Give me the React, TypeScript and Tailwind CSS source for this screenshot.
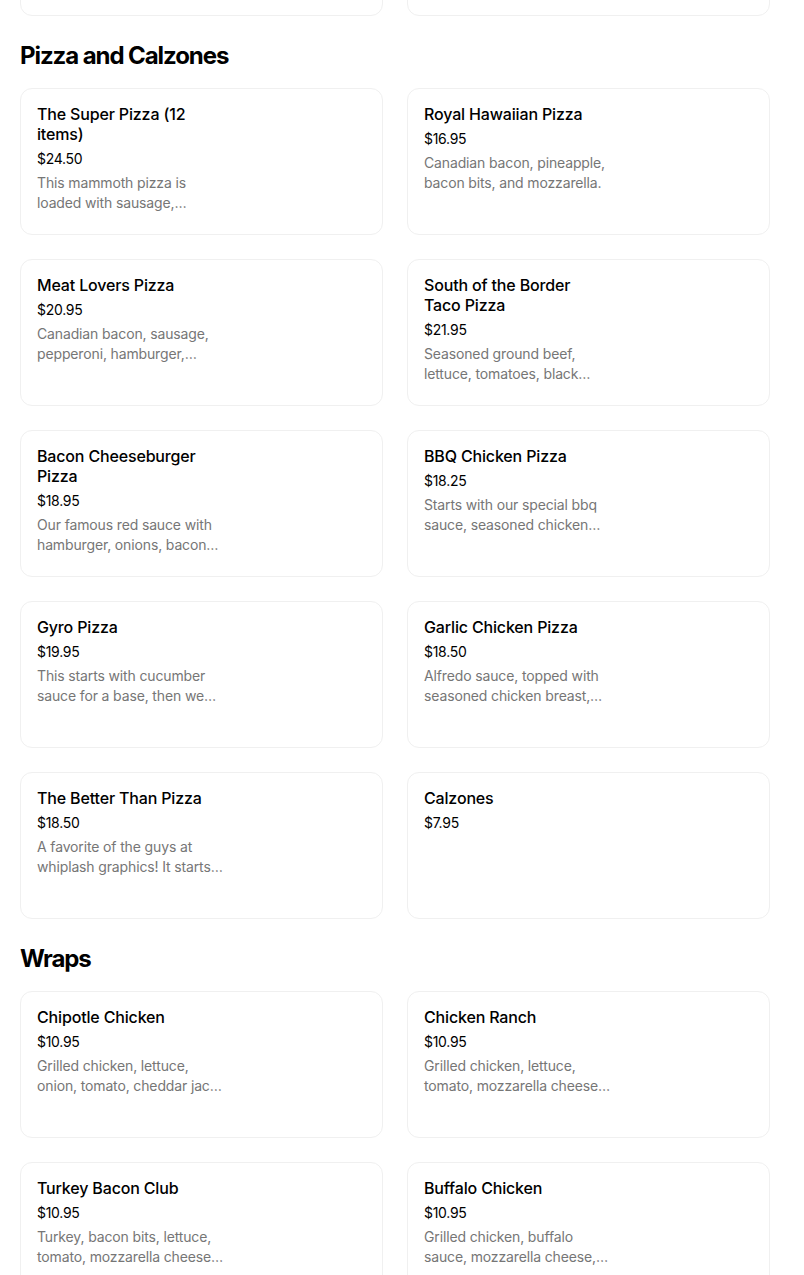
type Item = {
  name: string[];
  price: string;
  desc?: string[];
};

type Section = {
  title: string;
  items: Item[];
};

// lines are kept as the menu shows them (two-line clamp with ellipsis)
const sections: Section[] = [
  {
    title: "Pizza and Calzones",
    items: [
      {
        name: ["The Super Pizza (12", "items)"],
        price: "$24.50",
        desc: ["This mammoth pizza is", "loaded with sausage,…"],
      },
      {
        name: ["Royal Hawaiian Pizza"],
        price: "$16.95",
        desc: ["Canadian bacon, pineapple,", "bacon bits, and mozzarella."],
      },
      {
        name: ["Meat Lovers Pizza"],
        price: "$20.95",
        desc: ["Canadian bacon, sausage,", "pepperoni, hamburger,…"],
      },
      {
        name: ["South of the Border", "Taco Pizza"],
        price: "$21.95",
        desc: ["Seasoned ground beef,", "lettuce, tomatoes, black…"],
      },
      {
        name: ["Bacon Cheeseburger", "Pizza"],
        price: "$18.95",
        desc: ["Our famous red sauce with", "hamburger, onions, bacon…"],
      },
      {
        name: ["BBQ Chicken Pizza"],
        price: "$18.25",
        desc: ["Starts with our special bbq", "sauce, seasoned chicken…"],
      },
      {
        name: ["Gyro Pizza"],
        price: "$19.95",
        desc: ["This starts with cucumber", "sauce for a base, then we…"],
      },
      {
        name: ["Garlic Chicken Pizza"],
        price: "$18.50",
        desc: ["Alfredo sauce, topped with", "seasoned chicken breast,…"],
      },
      {
        name: ["The Better Than Pizza"],
        price: "$18.50",
        desc: ["A favorite of the guys at", "whiplash graphics! It starts…"],
      },
      {
        name: ["Calzones"],
        price: "$7.95",
      },
    ],
  },
  {
    title: "Wraps",
    items: [
      {
        name: ["Chipotle Chicken"],
        price: "$10.95",
        desc: ["Grilled chicken, lettuce,", "onion, tomato, cheddar jac…"],
      },
      {
        name: ["Chicken Ranch"],
        price: "$10.95",
        desc: ["Grilled chicken, lettuce,", "tomato, mozzarella cheese…"],
      },
      {
        name: ["Turkey Bacon Club"],
        price: "$10.95",
        desc: ["Turkey, bacon bits, lettuce,", "tomato, mozzarella cheese…"],
      },
      {
        name: ["Buffalo Chicken"],
        price: "$10.95",
        desc: ["Grilled chicken, buffalo", "sauce, mozzarella cheese,…"],
      },
    ],
  },
];

function MenuCard({ item }: { item?: Item }) {
  return (
    <div className="h-[147px] rounded-xl border border-[#f0f0f0] bg-white px-4 pt-[15px]">
      {item && (
        <div>
          <h3 className="text-[16px] leading-5 font-medium tracking-[-0.01em] text-black">
            {item.name.map((line) => (
              <span key={line} className="block whitespace-nowrap">
                {line}
              </span>
            ))}
          </h3>
          <p className="mt-[5px] text-[14px] leading-5 tracking-[-0.02em] text-black">
            {item.price}
          </p>
          {item.desc && (
            <p className="mt-1 text-[14px] leading-5 tracking-[-0.01em] text-[#767676]">
              {item.desc.map((line) => (
                <span key={line} className="block whitespace-nowrap">
                  {line}
                </span>
              ))}
            </p>
          )}
        </div>
      )}
    </div>
  );
}

export default function App() {
  return (
    <div className="min-h-screen overflow-hidden bg-white font-['Inter','Noto_Sans',sans-serif]">
      <div className="ml-5 w-[750px]">
        {/* tail of the section above */}
        <div className="-mt-[131px] grid grid-cols-2 gap-6">
          <MenuCard />
          <MenuCard />
        </div>

        {sections.map((section) => (
          <section key={section.title}>
            <h2 className="mt-6 mb-4 text-[24px] leading-8 font-bold tracking-[-0.045em] text-black">
              {section.title}
            </h2>
            <div className="grid grid-cols-2 gap-6">
              {section.items.map((item) => (
                <MenuCard key={item.name.join(" ")} item={item} />
              ))}
            </div>
          </section>
        ))}
      </div>
    </div>
  );
}
